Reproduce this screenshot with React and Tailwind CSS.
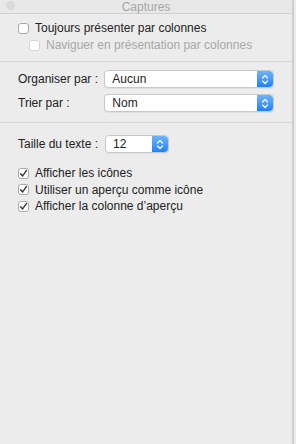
import React from "react";

const font = { fontFamily: '"Helvetica Neue", "Liberation Sans", Arial, sans-serif' };

function Check({ checked, disabled }) {
  return (
    <span
      className={
        "flex h-[11px] w-[11px] shrink-0 items-center justify-center rounded-[3px] border bg-white " +
        (disabled ? "border-[#d6d6d6]" : "border-[#a9a9a9]")
      }
    >
      {checked && (
        <svg width="9" height="9" viewBox="0 0 9 9">
          <path d="M1.6 4.8 L3.6 6.9 L7.4 1.6" fill="none" stroke="#333" strokeWidth="1.4" strokeLinecap="round" strokeLinejoin="round" />
        </svg>
      )}
    </span>
  );
}

function Stepper() {
  return (
    <span className="flex h-full w-[16px] shrink-0 items-center justify-center rounded-r-[4px] bg-gradient-to-b from-[#6cb3fa] to-[#1a82fb]">
      <svg width="8" height="11" viewBox="0 0 8 11">
        <path d="M1.5 4 L4 1.5 L6.5 4 M1.5 7 L4 9.5 L6.5 7" fill="none" stroke="white" strokeWidth="1.2" strokeLinecap="round" strokeLinejoin="round" />
      </svg>
    </span>
  );
}

function Popup({ value, width }) {
  return (
    <div className={"flex h-[18px] items-stretch rounded-[4px] border border-[#c8c8c8] bg-white shadow-[0_1px_0_rgba(0,0,0,0.05)] " + width}>
      <span className="flex flex-1 items-center pl-[7px] text-[12px] leading-none text-[#222]">{value}</span>
      <Stepper />
    </div>
  );
}

function Row({ label, children }) {
  return (
    <div className="flex h-[18px] items-center">
      <span className="w-[87px] whitespace-nowrap text-[12px] leading-none text-[#222]">{label}</span>
      {children}
    </div>
  );
}

export default function App() {
  return (
    <div className="relative h-[444px] w-[296px] overflow-hidden bg-[#ececec]" style={font}>
      <div className="flex h-[444px] w-[294px] flex-col border-r-[2px] border-[#cfcfcf] bg-[#ececec]">
        {/* title bar */}
        <div className="relative flex h-[14px] shrink-0 items-center justify-center border-b border-[#d0d0d0] bg-[#e8e8e8]">
          <span className="absolute left-[6px] top-[1px] h-[9px] w-[9px] rounded-full bg-[#dadada]" />
          <span className="text-[12px] leading-none text-[#a6a6a6]">Captures</span>
        </div>
        {/* section 1 */}
        <div className="flex shrink-0 flex-col gap-[1px] border-b border-[#d6d6d6] px-[18px] pb-[8px] pt-[6px]">
          <label className="flex h-[16px] items-center gap-[6px] whitespace-nowrap text-[12px] leading-none text-[#222]">
            <Check />
            <span>Toujours présenter par colonnes</span>
          </label>
          <label className="ml-[11px] flex h-[16px] items-center gap-[6px] whitespace-nowrap text-[12px] leading-none text-[#a8a8a8]">
            <Check disabled />
            <span>Naviguer en présentation par colonnes</span>
          </label>
        </div>
        {/* section 2 */}
        <div className="flex shrink-0 flex-col gap-[6px] border-b border-[#d6d6d6] px-[18px] pb-[10px] pt-[8px]">
          <Row label="Organiser par :">
            <Popup value="Aucun" width="w-[171px]" />
          </Row>
          <Row label="Trier par :">
            <Popup value="Nom" width="w-[171px]" />
          </Row>
        </div>
        {/* section 3 */}
        <div className="flex flex-col px-[18px] pt-[12px]">
          <Row label="Taille du texte :">
            <Popup value="12" width="w-[64px]" />
          </Row>
          <div className="mt-[12px] flex flex-col gap-[0.5px]">
            {["Afficher les icônes", "Utiliser un aperçu comme icône", "Afficher la colonne d’aperçu"].map((t) => (
              <label key={t} className="flex h-[16px] items-center gap-[6px] whitespace-nowrap text-[12px] leading-none text-[#222]">
                <Check checked />
                <span>{t}</span>
              </label>
            ))}
          </div>
        </div>
      </div>
    </div>
  );
}
